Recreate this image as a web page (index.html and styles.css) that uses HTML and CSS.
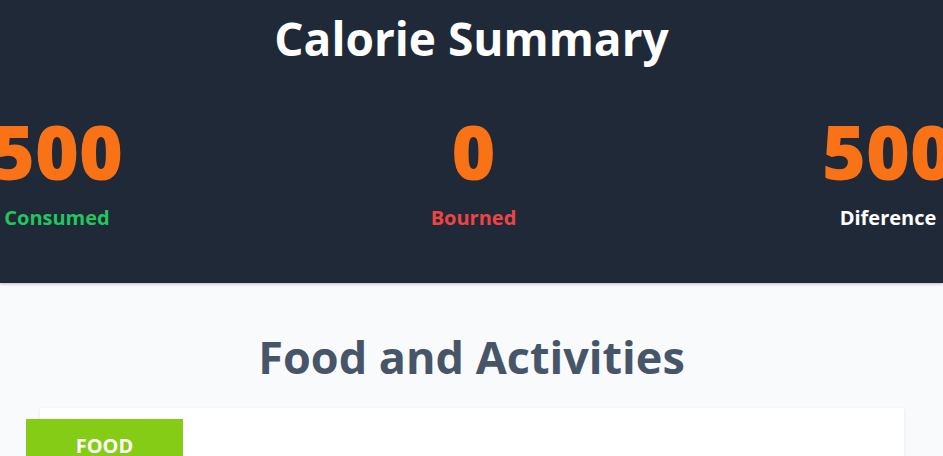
FILE: index.html
```html
<!DOCTYPE html>
<html lang="en">
<head>
<meta charset="utf-8">
<title>Calorie Summary</title>
<link rel="stylesheet" href="styles.css">
</head>
<body>
<header class="summary">
  <h1 class="summary-title">Calorie Summary</h1>
  <div class="stats">
    <div class="stat">
      <div class="stat-value">500</div>
      <div class="stat-label label-consumed">Consumed</div>
    </div>
    <div class="stat">
      <div class="stat-value">0</div>
      <div class="stat-label label-burned">Bourned</div>
    </div>
    <div class="stat">
      <div class="stat-value">500</div>
      <div class="stat-label label-diff">Diference</div>
    </div>
  </div>
</header>
<main class="activities">
  <h2 class="activities-title">Food and Activities</h2>
  <section class="card">
    <div class="tab">FOOD</div>
  </section>
</main>
</body>
</html>
```

FILE: styles.css
```css
* { box-sizing: border-box; }
html, body {
  margin: 0;
  padding: 0;
  background: #f9fafb;
  font-family: "Open Sans", "Noto Sans", sans-serif;
  overflow: hidden;
}
.summary {
  background: #1f2937;
  padding: 15px 0 55px;
  box-shadow: 0 1px 3px rgba(0,0,0,0.25);
  position: relative;
  z-index: 1;
}
.summary-title {
  margin: 0;
  font-size: 46px;
  line-height: 1;
  font-weight: 700;
  color: #ffffff;
  text-align: center;
}
.stats {
  display: grid;
  grid-template-columns: 114px 1fr 110px;
  margin-top: 53px;
}
.stat {
  display: flex;
  flex-direction: column;
  align-items: center;
}
.stat-value {
  font-size: 75px;
  line-height: 1;
  font-weight: 800;
  color: #f97316;
  white-space: nowrap;
}
.stat-label {
  margin-top: 19px;
  font-size: 20px;
  line-height: 1;
  font-weight: 700;
  white-space: nowrap;
}
.label-consumed { color: #22c55e; }
.label-burned { color: #ef4444; }
.label-diff { color: #ffffff; }
.activities {
  padding-top: 51px;
}
.activities-title {
  margin: 0;
  font-size: 45px;
  line-height: 1;
  font-weight: 700;
  color: #475569;
  text-align: center;
}
.card {
  margin: 29px 39px 0 40px;
  background: #ffffff;
  padding-top: 11px;
  height: 200px;
  box-shadow: 0 1px 4px rgba(0,0,0,0.08);
}
.tab {
  margin-left: -14px;
  width: 157px;
  background: #84cc16;
  color: #ffffff;
  font-size: 20px;
  line-height: 1;
  font-weight: 700;
  text-align: center;
  padding: 17px 0 20px;
}
```
